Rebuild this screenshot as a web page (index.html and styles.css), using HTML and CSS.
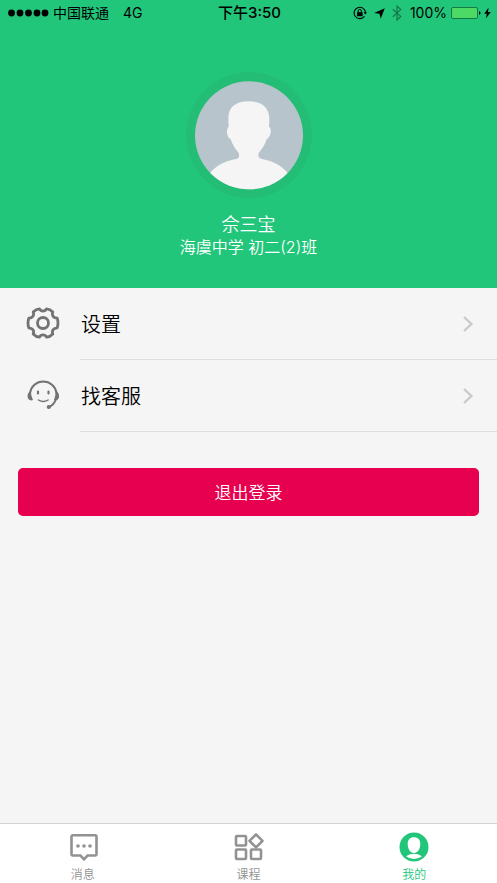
FILE: index.html
```html
<!DOCTYPE html>
<html lang="zh-CN">
<head>
<meta charset="utf-8">
<meta name="viewport" content="width=device-width, initial-scale=1">
<title>我的</title>
<link rel="stylesheet" href="styles.css">
</head>
<body>
<header class="profile">
  <div class="status">
    <div class="status-left">
      <svg class="signal" width="41" height="8" viewBox="0 0 41 8"><circle cx="3.5" cy="4" r="3.4"/><circle cx="12" cy="4" r="3.4"/><circle cx="20.500" cy="4" r="3.4"/><circle cx="29" cy="4" r="3.4"/><circle cx="37" cy="4" r="3.4"/></svg>
      <span>中国联通</span>
      <span class="network">4G</span>
    </div>
    <div class="status-time">下午3:50</div>
    <div class="status-right">
      <svg width="14" height="14" viewBox="0 0 14 14"><path d="M11.500 10.200A5.700 5.700 0 1 1 12.500 6.500" fill="none" stroke="#000" stroke-width="1.100"/><path d="M10.500 6.300h3.500l-1.700 2.300z"/><rect x="4" y="6.200" width="5.600" height="4"/><path d="M5.200 6.500V5a1.600 1.600 0 0 1 3.200 0v1.500" fill="none" stroke="#000"/></svg>
      <svg class="locate" width="11" height="11" viewBox="0 0 11 11"><path d="M10.800.3 6.700 10.800 5.500 5.800.2 4.900z"/></svg>
      <svg class="bluetooth" width="10" height="16" viewBox="0 0 10 16"><path d="m.8 4.300 8 7.200L5 15V1l3.800 3.500-8 7.200" fill="none" stroke="#147a49" stroke-width="1.200"/></svg>
      <span class="charge">100%</span>
      <svg class="battery" width="30" height="12" viewBox="0 0 30 12"><rect x=".5" y=".5" width="26" height="11" rx="1.500" fill="#4cd964" stroke="#147a49"/><path d="M28 4.200q1.500.3 1.500 1.800T28 7.800z"/></svg>
      <svg width="7" height="12" viewBox="0 0 7 12"><path d="M4.600.5.2 6.700h2.600L1.800 11.500 6.800 4.900H4z"/></svg>
    </div>
  </div>
  <svg class="avatar" width="126" height="126" viewBox="17 20 378 378">
    <defs><clipPath id="face"><circle cx="206" cy="210" r="162"/></clipPath></defs>
    <circle cx="206" cy="209" r="189" fill="#23bd75"/>
    <circle cx="206" cy="210" r="162" fill="#b8c4cb"/>
    <path clip-path="url(#face)" fill="#f5f5f5" d="M206 108C165 108 145 126 144 157L145 184C137 190 138 216 151 222C157 241 167 253 175 263C179 277 174 280 163 282C132 288 105 302 88 325V390H323V325C306 302 279 288 249 282C237 280 232 277 235 263C244 252 255 238 259 222C273 214 275 189 266 184L267 157C265 126 245 108 206 108Z"/>
  </svg>
  <h1 class="name">佘三宝</h1>
  <p class="school">海虞中学 初二(2)班</p>
</header>
<main class="content">
  <nav class="menu">
    <a class="row" href="#settings">
      <svg class="row-icon" width="34" height="34" viewBox="0 0 34 34" fill="none" stroke="#737373" stroke-width="2.800"><circle cx="17" cy="16" r="5.500"/><path stroke-linejoin="round" d="M13.500 1.800C15 4.800 19 4.800 20.500 1.800Q24 2 26.800 5C25.500 8.500 27.500 11 31.200 11.200Q32.800 16 31.200 20.800C27.500 21 25.500 23.500 26.800 27Q24 30 20.500 30.200C19 27.200 15 27.200 13.500 30.200Q10 30 7.200 27C8.500 23.500 6.500 21 2.800 20.800Q1.200 16 2.800 11.200C6.500 11 8.500 8.500 7.200 5Q10 2 13.500 1.800Z"/></svg>
      <span class="row-body"><span>设置</span><svg width="12" height="18" viewBox="0 0 12 18"><path d="m2 2 7.500 7L2 16" fill="none" stroke="#c7c7cc" stroke-width="2.200"/></svg></span>
    </a>
    <a class="row" href="#support">
      <svg class="row-icon" width="34" height="34" viewBox="0 0 34 34" fill="none" stroke="#737373" stroke-linecap="round"><path stroke-width="2" d="M4 14A13.400 13.400 0 0 1 30.500 14M30 20Q28 26 23 28"/><path stroke-width="1.500" d="M12.500 21q4.800 3.200 9.600 0"/><path stroke-width="2.200" d="M12 12.500v2M22.500 12.500v2"/><path fill="#737373" stroke="none" d="M4.800 12C.8 13.500 0 21 5.300 21.500L7 21Q5 17 4.800 12ZM29.800 12C34 13.500 34.500 21 29.500 21.500L28 21Q29.500 17 29.800 12Z"/><circle cx="22.800" cy="28" r="2.100" fill="#737373" stroke="none"/></svg>
      <span class="row-body"><span>找客服</span><svg width="12" height="18" viewBox="0 0 12 18"><path d="m2 2 7.500 7L2 16" fill="none" stroke="#c7c7cc" stroke-width="2.200"/></svg></span>
    </a>
  </nav>
  <button class="logout" type="button">退出登录</button>
</main>
<nav class="tabs">
  <a class="tab" href="#messages">
    <svg width="30" height="30" viewBox="0 0 30 30"><path d="M5 3.300H27q1.500 0 1.500 1.500V22q0 1.500-1.500 1.500H19.500L16 27.300 12.500 23.500H5Q3.500 23.500 3.500 22V4.800Q3.500 3.300 5 3.300Z" fill="none" stroke="#929292" stroke-width="2.600"/><circle cx="10" cy="14" r="1.800" fill="#929292"/><circle cx="16" cy="14" r="1.800" fill="#929292"/><circle cx="22" cy="14" r="1.800" fill="#929292"/></svg>
    <span>消息</span>
  </a>
  <a class="tab" href="#courses">
    <svg width="30" height="30" viewBox="0 0 30 30" fill="none" stroke="#929292" stroke-width="2.600"><rect x="2" y="4" width="10" height="9.500" rx="1"/><rect x="2" y="17.500" width="10" height="9.500" rx="1"/><rect x="17" y="17.500" width="10" height="9.500" rx="1"/><path stroke-linejoin="round" d="m22 2.300 6.500 6.500-6.500 6.500-6.500-6.500z"/></svg>
    <span>课程</span>
  </a>
  <a class="tab tab-active" href="#me">
    <svg width="30" height="30" viewBox="0 0 30 30"><circle cx="15" cy="15" r="14.500" fill="#22c67b"/><path fill="#fff" d="M15 5.200C11 5.200 8.700 7.800 8.700 12c0 4.800 2.500 9 6.300 9s6.300-4.200 6.300-9c0-4.200-2.300-6.800-6.300-6.800zM7 24.200q4-2.400 8-2.400t8 2.400q-3.500 2.800-8 2.800t-8-2.800z"/></svg>
    <span>我的</span>
  </a>
</nav>
</body>
</html>
```

FILE: styles.css
```css
* { box-sizing: border-box; }

body {
  margin: 0;
  min-height: 100vh;
  display: flex;
  flex-direction: column;
  background: #f5f5f5;
  color: #000;
  font-family: "Inter", "Noto Sans CJK SC", sans-serif;
  font-weight: 350;
}

a { color: inherit; text-decoration: none; }
svg { display: block; flex: none; }

.profile {
  display: flex;
  flex-direction: column;
  align-items: center;
  padding-bottom: 30px;
  background: #22c67b;
  color: #fff;
}

.status {
  align-self: stretch;
  display: grid;
  grid-template-columns: 1fr auto 1fr;
  align-items: center;
  height: 26px;
  padding: 0 6px 0 8px;
  color: #000;
  font-size: 14px;
  font-weight: 400;
  line-height: 26px;
}

.status-left, .status-right { display: flex; align-items: center; }
.signal { margin-right: 4px; }
.network { margin-left: 14px; }
.status-time { font-size: 15px; font-weight: 500; }
.status-right { justify-content: flex-end; }
.locate { margin: 0 7px; }
.bluetooth { margin-right: 8px; }
.battery { margin: 0 3px 0 4px; }

.avatar { margin-top: 46px; }

.name {
  margin: 15px 0 0;
  font-size: 18px;
  font-weight: 350;
  line-height: 24px;
}

.school {
  margin: 0;
  font-size: 16px;
  line-height: 21px;
}

.content { flex: 1; }

.row {
  display: flex;
  align-items: center;
  padding-left: 26px;
}

.row-icon { margin-right: 20px; }

.row-body {
  flex: 1;
  display: flex;
  align-items: center;
  justify-content: space-between;
  height: 72px;
  padding: 0 23px 0 1px;
  border-bottom: 1px solid #dedede;
  font-size: 20px;
}

.logout {
  display: block;
  width: calc(100% - 36px);
  height: 48px;
  margin: 36px 18px 0;
  padding: 0 0 2px;
  border: 0;
  border-radius: 5px;
  background: #e6004f;
  color: #fff;
  font: inherit;
  font-size: 17px;
}

.tabs {
  display: flex;
  height: 60px;
  border-top: 1px solid #d4d4d4;
  background: #fff;
}

.tab {
  flex: 1;
  display: flex;
  flex-direction: column;
  align-items: center;
  padding-top: 8px;
  color: #929292;
  font-size: 12px;
  line-height: 20px;
}

.tab span { margin-top: 3px; }
.tab-active { color: #22c67b; }
```
